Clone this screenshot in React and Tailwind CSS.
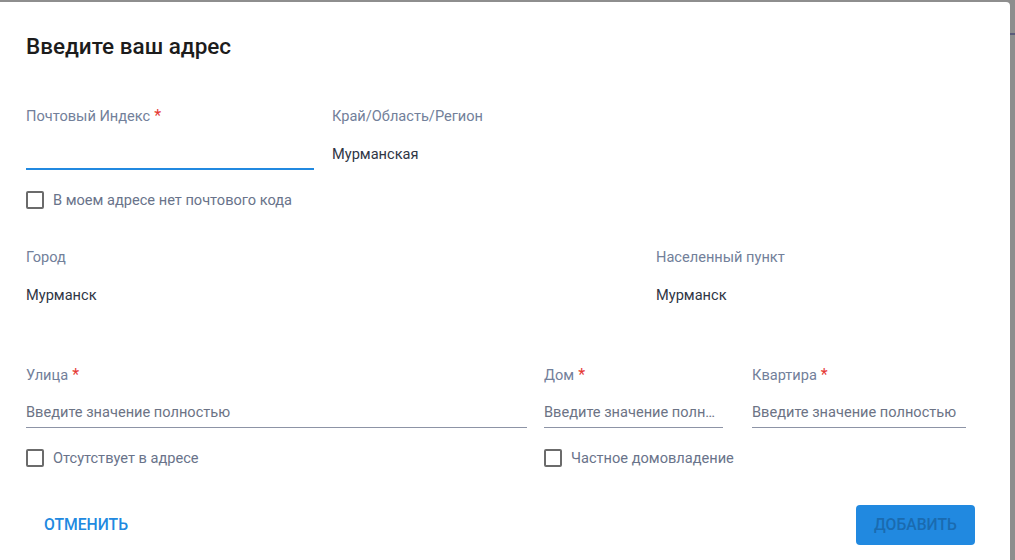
import React, { useState } from 'react';

const Label = ({ children, required }) => (
  <div className="h-[20px] text-[14.6px] leading-[20px] text-[#72809a] whitespace-nowrap">
    {children}
    {required && <span className="ml-[4px] text-[#e53935] text-[16px] leading-[20px]">*</span>}
  </div>
);

const Checkbox = ({ label }) => {
  const [checked, setChecked] = useState(false);
  return (
    <label className="flex items-center h-[20px] cursor-pointer">
      <span
        onClick={() => setChecked(!checked)}
        className="w-[18px] h-[18px] border-2 border-[#6b6b6b] rounded-[2px] bg-white"
      />
      <span className="ml-[9px] text-[14.6px] leading-[20px] text-[#69738a]">{label}</span>
    </label>
  );
};

const StaticField = ({ label, value, width }) => (
  <div className={width}>
    <Label>{label}</Label>
    <div className="h-[44px] pt-[18px] text-[14.6px] leading-[20px] text-[#2f3645]">{value}</div>
  </div>
);

const TextField = ({ label, width }) => (
  <div className={width}>
    <Label required>{label}</Label>
    <div className="pt-[17px] pb-[5px] border-b border-[#8d94a6]">
      <input
        className="block w-full h-[20px] text-[14.6px] leading-[20px] text-[#2f3645] placeholder:text-[#6c7385] outline-none bg-transparent truncate"
        placeholder="Введите значение полностью"
      />
    </div>
  </div>
);

export default function App() {
  const [index, setIndex] = useState('');

  return (
    <div className="flex w-[1015px] h-[560px] bg-[#8e8e8e] overflow-hidden" style={{ fontFamily: 'Roboto, "Noto Sans", sans-serif' }}>
      <div className="mt-[2px] w-[1010px] h-[558px] bg-white rounded-tr-[4px] pl-[26px] pt-[30px]">
        <h1 className="text-[22.5px] leading-[28px] font-medium text-[#1c1c1c]">Введите ваш адрес</h1>

        {/* индекс + регион */}
        <div className="flex mt-[46px]">
          <div className="w-[288px]">
            <Label required>Почтовый Индекс</Label>
            <div className="pt-[18px] pb-[4px] border-b-2 border-[#2189e0]">
              <input
                className="block w-full h-[20px] text-[14.6px] leading-[20px] outline-none bg-transparent"
                value={index}
                onChange={e => setIndex(e.target.value)}
              />
            </div>
          </div>
          <StaticField label="Край/Область/Регион" value="Мурманская" width="ml-[18px] w-[300px]" />
        </div>

        <div className="mt-[20px]">
          <Checkbox label="В моем адресе нет почтового кода" />
        </div>

        {/* город */}
        <div className="flex mt-[37px]">
          <StaticField label="Город" value="Мурманск" width="w-[630px]" />
          <StaticField label="Населенный пункт" value="Мурманск" width="w-[300px]" />
        </div>

        {/* улица, дом, квартира */}
        <div className="flex mt-[54px]">
          <TextField label="Улица" width="w-[501px]" />
          <TextField label="Дом" width="ml-[17px] w-[179px]" />
          <TextField label="Квартира" width="ml-[29px] w-[214px]" />
        </div>

        <div className="flex mt-[20px]">
          <div className="w-[518px]">
            <Checkbox label="Отсутствует в адресе" />
          </div>
          <Checkbox label="Частное домовладение" />
        </div>

        <div className="flex items-center justify-between mt-[37px] pr-[35px]">
          <button className="h-[40px] px-[18px] text-[15.7px] font-medium uppercase text-[#2189e0]">
            Отменить
          </button>
          <button className="h-[40px] w-[119px] rounded-[4px] bg-[#2189e0] text-[15.7px] font-medium uppercase text-[#1a6bb0]">
            Добавить
          </button>
        </div>
      </div>
      <div className="flex-1">
        <div className="mt-[33px] h-[2px] bg-[#5b5b7b]" />
      </div>
    </div>
  );
}
